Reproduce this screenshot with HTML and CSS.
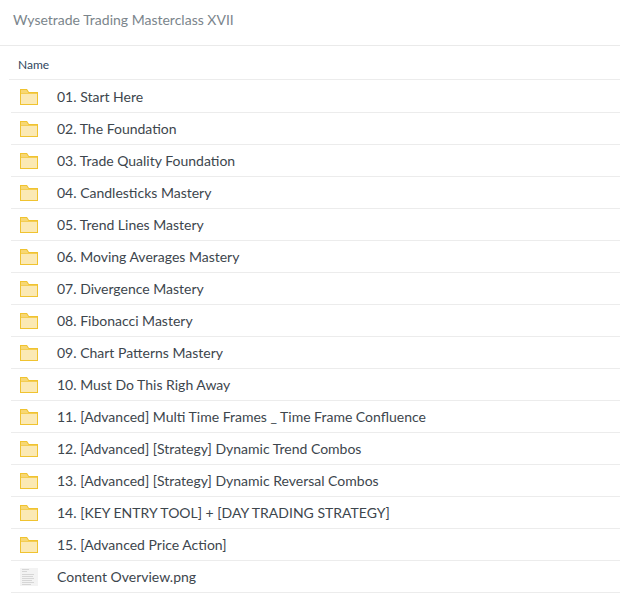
FILE: index.html
```html
<!DOCTYPE html>
<html lang="en">
<head>
<meta charset="utf-8">
<title>Wysetrade Trading Masterclass XVII</title>
<link rel="stylesheet" href="styles.css">
</head>
<body>
<svg class="defs" width="0" height="0" aria-hidden="true">
  <symbol id="folder" viewBox="0 0 18 16">
    <path d="M0 0V16H18V3H9L7 0Z" fill="#f0c330"/>
    <path d="M1 1H6.5L8.5 4H17V4.5H1Z" fill="#f7d774"/>
    <rect x="1" y="5" width="16" height="10" fill="#fbe9b4"/>
  </symbol>
</svg>
<header class="title-bar"><h1 class="title">Wysetrade Trading Masterclass XVII</h1></header>
<main class="listing">
  <div class="head">Name</div>
  <ul class="rows">
    <li class="row"><svg class="icon"><use href="#folder"/></svg><span>01. Start Here</span></li>
    <li class="row"><svg class="icon"><use href="#folder"/></svg><span>02. The Foundation</span></li>
    <li class="row"><svg class="icon"><use href="#folder"/></svg><span>03. Trade Quality Foundation</span></li>
    <li class="row"><svg class="icon"><use href="#folder"/></svg><span>04. Candlesticks Mastery</span></li>
    <li class="row"><svg class="icon"><use href="#folder"/></svg><span>05. Trend Lines Mastery</span></li>
    <li class="row"><svg class="icon"><use href="#folder"/></svg><span>06. Moving Averages Mastery</span></li>
    <li class="row"><svg class="icon"><use href="#folder"/></svg><span>07. Divergence Mastery</span></li>
    <li class="row"><svg class="icon"><use href="#folder"/></svg><span>08. Fibonacci Mastery</span></li>
    <li class="row"><svg class="icon"><use href="#folder"/></svg><span>09. Chart Patterns Mastery</span></li>
    <li class="row"><svg class="icon"><use href="#folder"/></svg><span>10. Must Do This Righ Away</span></li>
    <li class="row"><svg class="icon"><use href="#folder"/></svg><span>11. [Advanced] Multi Time Frames _ Time Frame Confluence</span></li>
    <li class="row"><svg class="icon"><use href="#folder"/></svg><span>12. [Advanced] [Strategy] Dynamic Trend Combos</span></li>
    <li class="row"><svg class="icon"><use href="#folder"/></svg><span>13. [Advanced] [Strategy] Dynamic Reversal Combos</span></li>
    <li class="row"><svg class="icon"><use href="#folder"/></svg><span>14. [KEY ENTRY TOOL] + [DAY TRADING STRATEGY]</span></li>
    <li class="row"><svg class="icon"><use href="#folder"/></svg><span>15. [Advanced Price Action]</span></li>
    <li class="row">
      <svg class="icon" viewBox="0 0 18 18">
        <rect width="18" height="18" fill="#f3f3f3"/>
        <g fill="#d6d6d6">
          <rect x="2" y="1" width="7" height="1"/><rect x="2" y="3" width="5" height="1"/>
          <rect x="2" y="6" width="12" height="1"/><rect x="2" y="8" width="11" height="1"/>
          <rect x="2" y="10" width="12" height="1"/><rect x="2" y="12" width="10" height="1"/>
          <rect x="2" y="14" width="12" height="1"/><rect x="2" y="16" width="9" height="1"/>
        </g>
      </svg>
      <span>Content Overview.png</span>
    </li>
  </ul>
</main>
</body>
</html>
```
FILE: styles.css
```css
* { box-sizing: border-box; }
html, body { margin: 0; padding: 0; background: #fff; }
body { width: 620px; height: 615px; overflow: hidden; font-family: Lato, "Liberation Sans", sans-serif; color: #3d464d; }
.defs { position: absolute; }
.title-bar { height: 46px; border-bottom: 1px solid #eaeaea; padding: 10px 0 0 13px; }
.title { margin: 0; font-size: 14px; font-weight: 400; line-height: 20px; color: #7b858c; }
.listing { padding-left: 9px; }
.head { height: 34px; border-bottom: 1px solid #ececec; padding: 11px 0 0 9px; font-size: 12px; line-height: 16px; color: #30475e; }
.rows { list-style: none; margin: 0; padding: 1px 0 0 2px; }
.row { height: 32px; display: flex; align-items: center; gap: 19px; padding-left: 9px; border-bottom: 1px solid #ececec; font-size: 14px; }
.icon { width: 18px; height: 16px; flex: none; margin-top: 1px; }
.row:last-child .icon { height: 18px; }
```
